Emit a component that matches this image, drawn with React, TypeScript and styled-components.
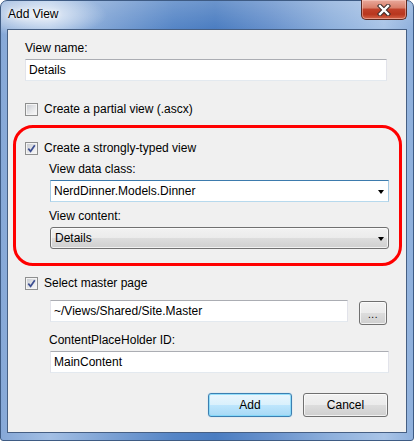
import React from "react";
import styled, { createGlobalStyle } from "styled-components";

const GlobalStyle = createGlobalStyle`
  html, body { margin: 0; padding: 0; background: #ffffff; }
  body { font-family: "Liberation Sans", Arial, sans-serif; font-size: 12px; color: #000; }
  * { box-sizing: border-box; }
`;

const Window = styled.div`
  width: 414px;
  height: 441px;
  display: flex;
  flex-direction: column;
  border: 1px solid #3e5b84;
  border-radius: 7px 7px 3px 3px;
  padding: 0 6px 7px 6px;
  background:
    radial-gradient(ellipse 70px 22px at 36px 14px, rgba(255, 255, 255, 0.8), rgba(255, 255, 255, 0) 100%),
    linear-gradient(to bottom, rgba(255, 255, 255, 0.18) 0px, rgba(255, 255, 255, 0) 28px),
    linear-gradient(to right, #86a8d7 0%, #a3bfe4 12%, #7da2d4 26%, #5585c6 42%, #4b7dc1 52%, #6a93cd 66%, #8eb0dc 80%, #a9c4e7 93%, #8fb0dc 100%);
`;

const TitleBar = styled.div`
  height: 28px;
  flex: none;
  display: flex;
  justify-content: space-between;
  align-items: flex-start;
  padding-left: 1px;
`;

const Title = styled.div`
  margin-top: 6px;
  font-size: 12px;
  line-height: 15px;
  color: #000;
  text-shadow: 0 0 6px #ffffff, 0 0 3px #ffffff;
`;

const CloseButton = styled.div`
  width: 46px;
  height: 20px;
  margin-top: -1px;
  display: flex;
  align-items: center;
  justify-content: center;
  border: 1px solid #5c2a22;
  border-top: none;
  border-radius: 0 0 5px 5px;
  background: linear-gradient(to bottom, #e9a99b 0%, #d9806b 40%, #c0412a 50%, #b8361e 75%, #d4654a 100%);
  box-shadow: inset 0 0 0 1px rgba(255, 220, 210, 0.45);
`;

const Client = styled.div`
  flex: 1;
  display: flex;
  flex-direction: column;
  background: #f0f0f0;
  border: 1px solid #465f83;
  padding: 11px 0 0 5px;
`;

const Label = styled.div<{ $indent: number; $gap: number }>`
  margin-left: ${(p) => p.$indent}px;
  margin-top: ${(p) => p.$gap}px;
  height: 15px;
  line-height: 15px;
  white-space: nowrap;
`;

const TextBox = styled.div<{ $indent: number; $width: number; $gap: number; $focused?: boolean }>`
  margin-left: ${(p) => p.$indent}px;
  margin-top: ${(p) => p.$gap}px;
  width: ${(p) => p.$width}px;
  height: 22px;
  flex: none;
  display: flex;
  align-items: center;
  justify-content: space-between;
  padding: 0 4px 0 3px;
  background: #ffffff;
  border: 1px solid;
  border-color: ${(p) =>
    p.$focused ? "#3d7bad #a4c9e3 #b7d9ed #a4c9e3" : "#abadb3 #e2e3ea #e3e9ef #e2e3ea"};
  white-space: nowrap;
`;

const DropDown = styled.div<{ $indent: number; $width: number; $gap: number }>`
  margin-left: ${(p) => p.$indent}px;
  margin-top: ${(p) => p.$gap}px;
  width: ${(p) => p.$width}px;
  height: 22px;
  display: flex;
  align-items: center;
  justify-content: space-between;
  padding: 0 4px 0 4px;
  border: 1px solid #707070;
  border-radius: 3px;
  background: linear-gradient(to bottom, #f2f2f2 0%, #ebebeb 50%, #dddddd 50%, #cfcfcf 100%);
  box-shadow: inset 0 0 0 1px rgba(255, 255, 255, 0.7);
`;

const Arrow = styled.span`
  width: 0;
  height: 0;
  border-left: 3.5px solid transparent;
  border-right: 3.5px solid transparent;
  border-top: 4px solid #000;
  margin-top: 1px;
`;

const CheckRow = styled.div<{ $indent: number; $gap: number }>`
  margin-left: ${(p) => p.$indent}px;
  margin-top: ${(p) => p.$gap}px;
  height: 13px;
  display: flex;
  align-items: center;
  gap: 6px;
  white-space: nowrap;
`;

const CheckBox = styled.span`
  width: 13px;
  height: 13px;
  flex: none;
  display: block;
  border: 1px solid #8e8f8f;
  padding: 1px;
  background: linear-gradient(135deg, #c9ccd2 0%, #e6e7e9 55%, #f7f7f7 100%) content-box, #f4f4f4;
  box-shadow: inset 0 0 0 1px #f4f4f4;
`;

const CheckLabel = styled.span`
  line-height: 15px;
`;

const Highlight = styled.div`
  margin-top: 9px;
  width: 389px;
  border: 3px solid #ff0000;
  border-radius: 20px;
  padding: 14px 0 14px 0;
  display: flex;
  flex-direction: column;
`;

const FieldRow = styled.div<{ $indent: number; $gap: number }>`
  margin-left: ${(p) => p.$indent}px;
  margin-top: ${(p) => p.$gap}px;
  display: flex;
  align-items: flex-start;
  gap: 11px;
`;

const Button = styled.div<{ $width: number; $height: number; $primary?: boolean; $top?: number }>`
  width: ${(p) => p.$width}px;
  height: ${(p) => p.$height}px;
  margin-top: ${(p) => p.$top ?? 0}px;
  flex: none;
  display: flex;
  align-items: center;
  justify-content: center;
  border: 1px solid ${(p) => (p.$primary ? "#3c7fb1" : "#707070")};
  border-radius: 3px;
  background: ${(p) =>
    p.$primary
      ? "linear-gradient(to bottom, #eaf6fd 0%, #d9f0fc 50%, #bee6fd 50%, #a7d9f5 100%)"
      : "linear-gradient(to bottom, #f2f2f2 0%, #ebebeb 50%, #dddddd 50%, #cfcfcf 100%)"};
  box-shadow: ${(p) =>
    p.$primary
      ? "inset 0 0 0 1px rgba(120, 215, 250, 0.75), 0 0 1px rgba(60, 170, 230, 0.6)"
      : "inset 0 0 0 1px rgba(255, 255, 255, 0.7)"};
  white-space: nowrap;
`;

const Dots = styled.span`
  font-size: 10px;
  line-height: 10px;
  margin-top: 3px;
  letter-spacing: 0.5px;
`;

const ButtonRow = styled.div`
  margin-top: 20px;
  display: flex;
  justify-content: flex-end;
  gap: 11px;
  padding-right: 18px;
`;

const CloseGlyph = () => (
  <svg width="14" height="12" viewBox="0 0 14 12">
    <path d="M3 2 L11 10 M11 2 L3 10" stroke="#3a2a28" strokeWidth="4.4" strokeLinecap="square" />
    <path d="M3 2 L11 10 M11 2 L3 10" stroke="#ffffff" strokeWidth="2.4" strokeLinecap="square" />
  </svg>
);

const Check = () => (
  <svg width="9" height="9" viewBox="0 0 9 9" style={{ display: "block" }}>
    <path d="M1.3 4.6 L3.6 7.3 L7.8 1.2" fill="none" stroke="#3d4f91" strokeWidth="1.7" />
  </svg>
);

export default function App() {
  return (
    <>
      <GlobalStyle />
      <Window>
        <TitleBar>
          <Title>Add View</Title>
          <CloseButton>
            <CloseGlyph />
          </CloseButton>
        </TitleBar>
        <Client>
          <Label $indent={12} $gap={0}>View name:</Label>
          <TextBox $indent={12} $gap={3} $width={362}>Details</TextBox>

          <CheckRow $indent={12} $gap={22}>
            <CheckBox />
            <CheckLabel>Create a partial view (.ascx)</CheckLabel>
          </CheckRow>

          <Highlight>
            <CheckRow $indent={9} $gap={0}>
              <CheckBox>
                <Check />
              </CheckBox>
              <CheckLabel>Create a strongly-typed view</CheckLabel>
            </CheckRow>
            <Label $indent={33} $gap={7}>View data class:</Label>
            <TextBox $indent={34} $gap={3} $width={339} $focused>
              <span>NerdDinner.Models.Dinner</span>
              <Arrow />
            </TextBox>
            <Label $indent={33} $gap={7}>View content:</Label>
            <DropDown $indent={34} $gap={3} $width={339}>
              <span>Details</span>
              <Arrow />
            </DropDown>
          </Highlight>

          <CheckRow $indent={12} $gap={11}>
            <CheckBox>
              <Check />
            </CheckBox>
            <CheckLabel>Select master page</CheckLabel>
          </CheckRow>
          <FieldRow $indent={37} $gap={10}>
            <TextBox $indent={0} $gap={0} $width={298}>~/Views/Shared/Site.Master</TextBox>
            <Button $width={28} $height={24} $top={1}>
              <Dots>...</Dots>
            </Button>
          </FieldRow>
          <Label $indent={36} $gap={8}>ContentPlaceHolder ID:</Label>
          <TextBox $indent={37} $gap={3} $width={339}>MainContent</TextBox>

          <ButtonRow>
            <Button $width={84} $height={24} $primary>Add</Button>
            <Button $width={85} $height={24}>Cancel</Button>
          </ButtonRow>
        </Client>
      </Window>
    </>
  );
}
